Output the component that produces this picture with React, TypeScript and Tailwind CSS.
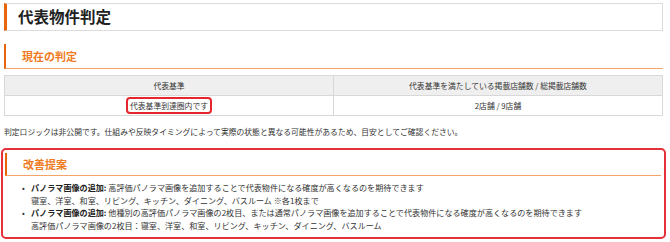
import React from "react";

const suggestions = [
  {
    label: "パノラマ画像の追加:",
    text: "高評価パノラマ画像を追加することで代表物件になる確度が高くなるのを期待できます",
    sub: "寝室、洋室、和室、リビング、キッチン、ダイニング、バスルーム ※各1枚まで",
  },
  {
    label: "パノラマ画像の追加:",
    text: "他種別の高評価パノラマ画像の2枚目、または通常パノラマ画像を追加することで代表物件になる確度が高くなるのを期待できます",
    sub: "高評価パノラマ画像の2枚目：寝室、洋室、和室、リビング、キッチン、ダイニング、バスルーム",
  },
];

const SectionHeading = ({ title }: { title: string }) => (
  <div className="flex h-[25px] items-center border-b border-l-2 border-b-[#f6a468] border-l-[#e9650c] pl-[16px]">
    <h2 className="text-[11px] font-bold text-[#ef7a22]">{title}</h2>
  </div>
);

const App = () => {
  return (
    <div className="h-[242px] w-[670px] overflow-hidden bg-white pl-[4px] pr-[7px] pt-[3px] font-['Noto_Sans_CJK_JP',sans-serif] text-[#333]">
      {/* page title */}
      <div className="flex h-[28px] items-center border border-l-[3px] border-[#dcdcdc] border-l-[#e9650c] pl-[11px]">
        <h1 className="text-[15.5px] font-bold leading-none text-[#222]">代表物件判定</h1>
      </div>

      <div className="mt-[13px]">
        <SectionHeading title="現在の判定" />
      </div>

      <table className="mt-[6px] w-full table-fixed border-collapse text-[7.8px] leading-none">
        <thead>
          <tr>
            <th className="h-[20px] border border-[#d8d8d8] bg-[#efefef] font-normal">代表基準</th>
            <th className="h-[20px] border border-[#d8d8d8] bg-[#efefef] font-normal">
              代表基準を満たしている掲載店舗数 / 総掲載店舗数
            </th>
          </tr>
        </thead>
        <tbody>
          <tr>
            <td className="h-[20px] border border-[#d8d8d8] text-center">
              <span className="inline-block rounded-[4px] border-2 border-[#e5262e] px-[2px] py-[3px]">
                代表基準到達圏内です
              </span>
            </td>
            <td className="h-[20px] border border-[#d8d8d8] text-center">2店舗 / 9店舗</td>
          </tr>
        </tbody>
      </table>

      <p className="mt-[10px] text-[7.8px] leading-[12px]">
        判定ロジックは非公開です。仕組みや反映タイミングによって実際の状態と異なる可能性があるため、目安としてご確認ください。
      </p>

      {/* improvement box */}
      <div className="mx-[-3px] mt-[10px] rounded-[5px] border-2 border-[#e5323a] pb-[5px] pl-[2px] pr-[3px] pt-[3px]">
        <div className="flex h-[23px] items-center border-b border-l-2 border-b-[#f6a468] border-l-[#e9650c] pl-[16px]">
          <h2 className="text-[11px] font-bold text-[#ef7a22]">改善提案</h2>
        </div>
        <ul className="mt-[6px] text-[8.1px] leading-[12.5px]">
          {suggestions.map((item, index) => (
            <li key={index} className="flex">
              <span className="w-[26px] shrink-0 pl-[17px]">•</span>
              <div>
                <div>
                  <span className="font-bold text-[#222]">{item.label}</span> {item.text}
                </div>
                <div>{item.sub}</div>
              </div>
            </li>
          ))}
        </ul>
      </div>
    </div>
  );
};

export default App;
